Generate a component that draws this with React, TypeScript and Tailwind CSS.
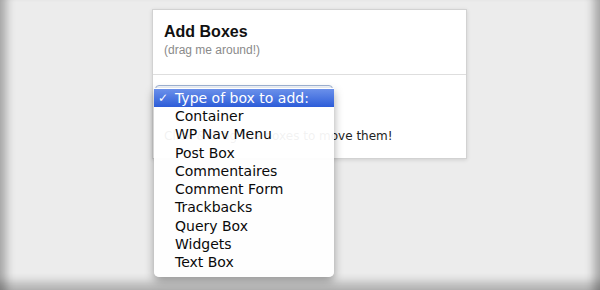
const menuItems = [
  "Container",
  "WP Nav Menu",
  "Post Box",
  "Commentaires",
  "Comment Form",
  "Trackbacks",
  "Query Box",
  "Widgets",
  "Text Box",
];

export default function App() {
  return (
    <div className="w-[600px] h-[290px] overflow-hidden bg-[#ececec] shadow-[inset_14px_0_10px_-8px_rgba(0,0,0,0.3),inset_-14px_0_10px_-8px_rgba(0,0,0,0.3),inset_0_-16px_10px_-8px_rgba(0,0,0,0.24)] pt-[9px] pl-[152px]">
      <div className="w-[315px] h-[150px] bg-white border border-[#d2d2d2] shadow-[0_1px_4px_rgba(0,0,0,0.12)] font-['Liberation_Sans',Arial,sans-serif]">
        {/* header */}
        <div className="px-[11px] pt-[12px] pb-[16px] border-b border-[#dedede]">
          <h2 className="text-[16px] leading-[20px] font-bold text-[#111]">Add Boxes</h2>
          <p className="text-[12px] leading-[16px] text-[#8a8a8a]">(drag me around!)</p>
        </div>

        {/* body */}
        <div className="pt-[10px] font-['DejaVu_Sans',sans-serif]">
          <div className="relative ml-[2px] w-[178px] h-[20px] rounded-[4px] border border-[#9fb3d4] bg-gradient-to-b from-[#f4f7fc] to-[#dfe6f2]">
            {/* open dropdown menu */}
            <div className="absolute left-[-2px] top-[2px] z-10 w-[180px] pt-[1px] pb-[5px] bg-white/[0.94] rounded-b-[5px] shadow-[0_4px_10px_rgba(0,0,0,0.35)] text-[14px] text-[#0a0a0a]">
              <div className="h-[18.3px] flex items-center bg-gradient-to-b from-[#6b90ea] to-[#2d5cd8] text-white">
                <span className="w-[21px] pl-[4px] text-[12px]">✓</span>
                <span>Type of box to add:</span>
              </div>
              {menuItems.map((item) => (
                <div key={item} className="h-[18.3px] flex items-center pl-[21px]">
                  {item}
                </div>
              ))}
            </div>
          </div>
          <p className="mt-[22px] pl-[11px] text-[12px] leading-[18px] text-[#222]">
            Click &amp; drag the boxes to move them!
          </p>
        </div>
      </div>
    </div>
  );
}
